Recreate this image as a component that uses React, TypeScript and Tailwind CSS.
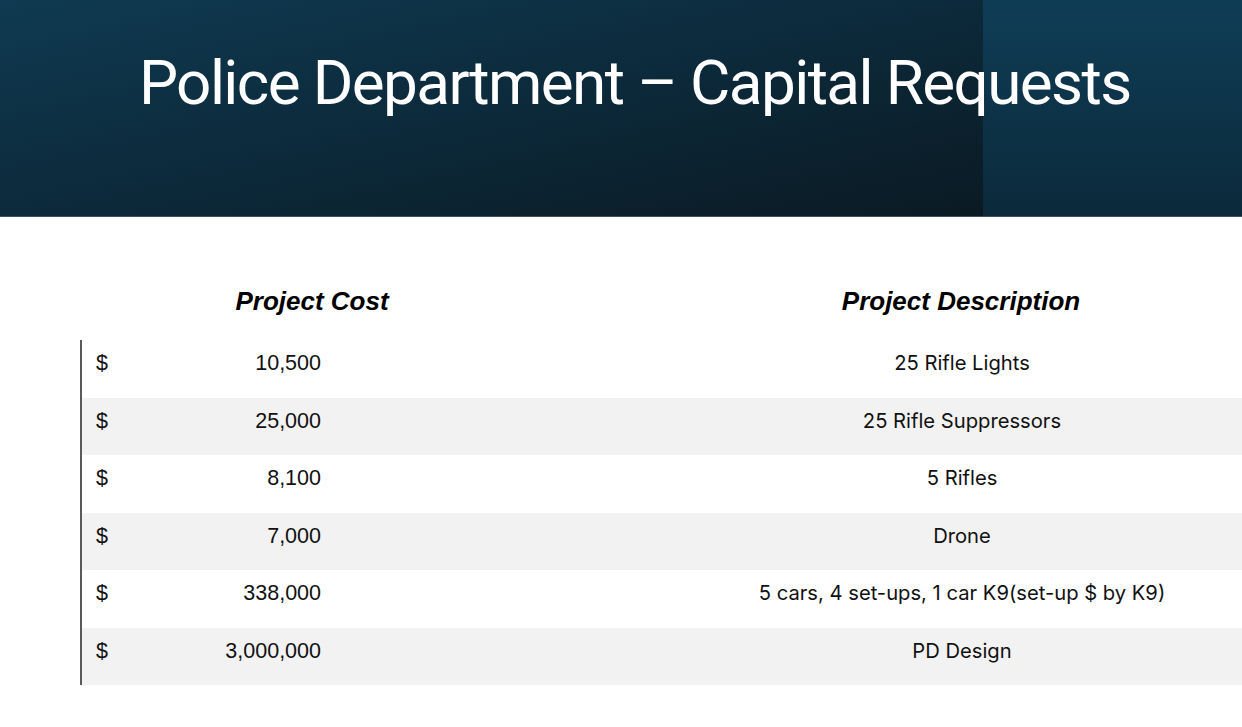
const requests = [
  { cost: "10,500", description: "25 Rifle Lights" },
  { cost: "25,000", description: "25 Rifle Suppressors" },
  { cost: "8,100", description: "5 Rifles" },
  { cost: "7,000", description: "Drone" },
  { cost: "338,000", description: "5 cars, 4 set-ups, 1 car K9(set-up $ by K9)" },
  { cost: "3,000,000", description: "PD Design" },
];

export default function App() {
  return (
    <div className="w-[1242px] h-[727px] bg-white overflow-hidden">
      {/* Title banner */}
      <header className="flex h-[217px] border-b border-[#3d5563]">
        <div className="w-[983px] shrink-0 min-w-0 bg-gradient-to-br from-[#0f3a51] via-[#0c2a3b] to-[#0a1a23] pl-[139px] pt-[52px]">
          <h1
            className="relative z-10 text-white text-[62px] leading-none tracking-[-1.6px] whitespace-nowrap"
            style={{ fontFamily: "Roboto, sans-serif" }}
          >
            Police Department – Capital Requests
          </h1>
        </div>
        <div className="flex-1 bg-gradient-to-b from-[#0f3d56] to-[#0b2a3b]" />
      </header>

      {/* Requests table */}
      <section className="pt-[65px]">
        <div className="flex h-[58px] items-start ml-[80px]" style={{ fontFamily: '"Liberation Sans", Arial, sans-serif' }}>
          <div className="w-[464px] text-center text-[26px] font-bold italic">Project Cost</div>
          <div className="flex-1 pl-[136px] text-center text-[26px] font-bold italic">Project Description</div>
        </div>

        <div className="ml-[80px] border-l-2 border-[#5a5a5a]">
          {requests.map((row, i) => (
            <div
              key={i}
              className={`flex items-start pt-[11px] h-[57.5px] ${i % 2 === 1 ? "bg-[#f2f2f2]" : "bg-white"}`}
            >
              <div
                className="w-[239px] flex justify-between pl-[14px] text-[21.5px] leading-[24px] text-[#111]"
                style={{ fontFamily: '"Liberation Sans", Arial, sans-serif' }}
              >
                <span>$</span>
                <span>{row.cost}</span>
              </div>
              <div
                className="flex-1 pl-[361px] text-center text-[20.2px] leading-[24px] text-[#111]"
                style={{ fontFamily: "Inter, sans-serif" }}
              >
                {row.description}
              </div>
            </div>
          ))}
        </div>
      </section>
    </div>
  );
}
